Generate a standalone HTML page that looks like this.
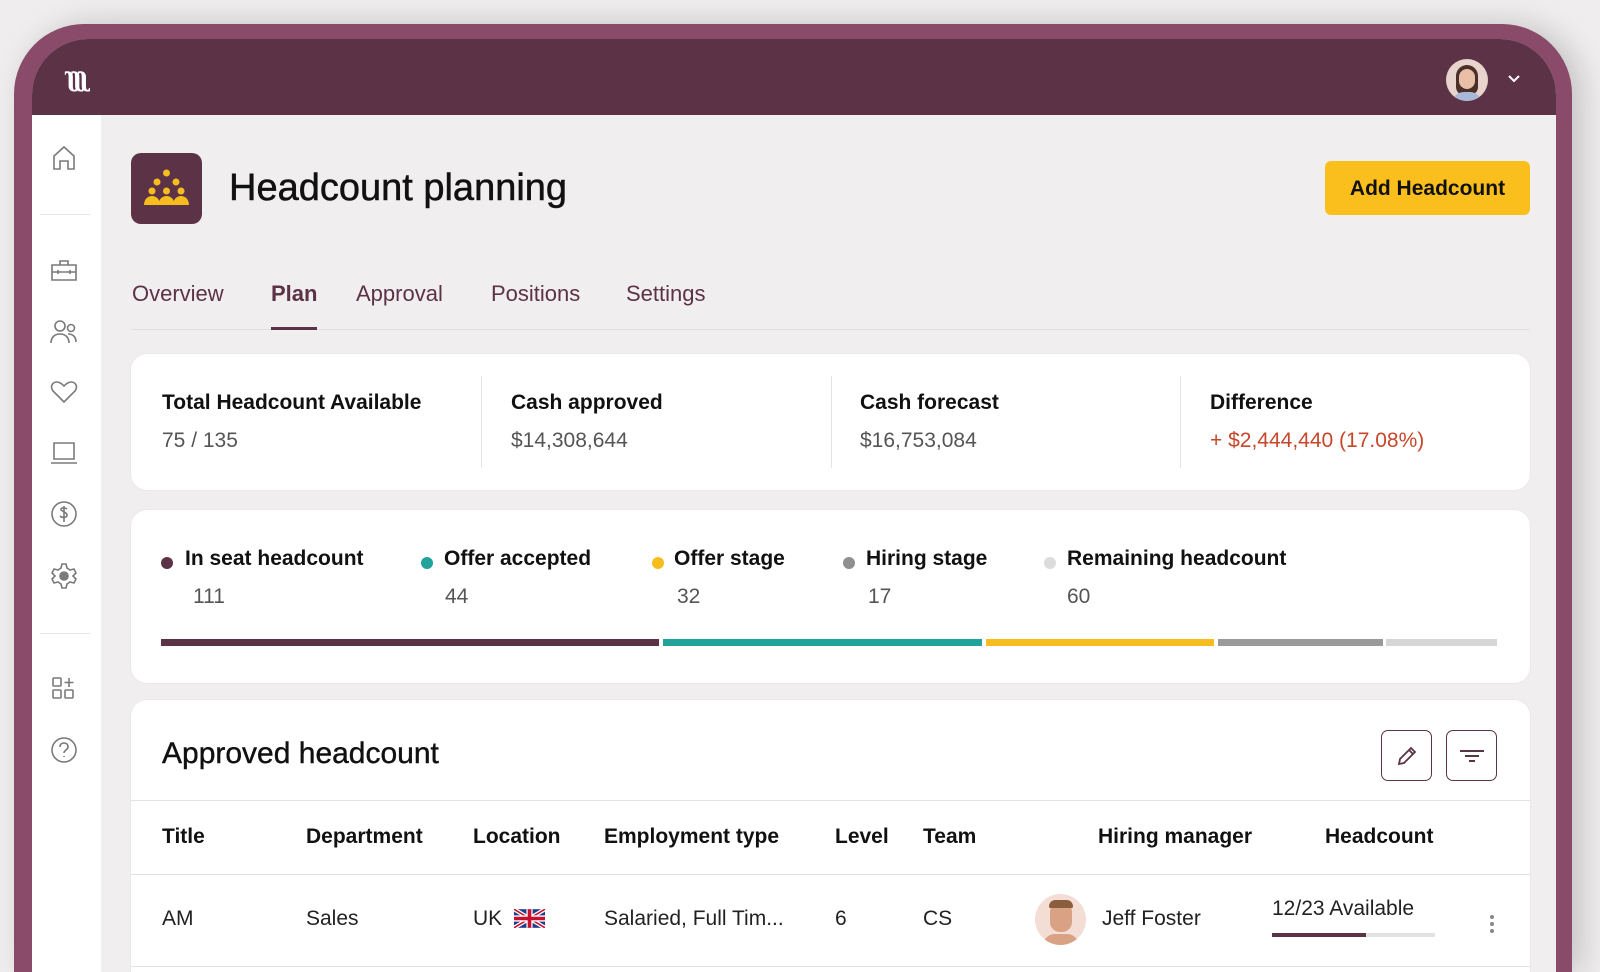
<!DOCTYPE html>
<html><head><meta charset="utf-8">
<style>
*{margin:0;padding:0;box-sizing:border-box}
html,body{width:1600px;height:972px;overflow:hidden}
body{background:#efeded;font-family:"Liberation Sans",sans-serif;position:relative;color:#111}
.abs{position:absolute}
.frame{left:14px;top:24px;width:1558px;height:948px;border-radius:70px 70px 0 0;background:#8a4a6a;box-shadow:10px 0 30px rgba(0,0,0,.18)}
.screen{left:32px;top:39px;width:1524px;height:933px;border-radius:56px 56px 0 0;background:#f0eeef;overflow:hidden}
.top{left:0;top:0;width:1524px;height:76px;background:#5c3246}
.side{left:0;top:76px;width:69px;height:857px;background:#fff}
.card{background:#fff;border-radius:16px;box-shadow:0 0 0 1px #ebe8ea}
.t{position:absolute;white-space:nowrap}
.lbl{font-size:21px;font-weight:bold;color:#111}
.val{font-size:21px;color:#555}
.dot{position:absolute;width:12px;height:12px;border-radius:50%}
.th{font-size:21px;font-weight:bold}
.td{font-size:21px;color:#222}
svg.ic{position:absolute;fill:none;stroke:#7a7a7a;stroke-width:1.6}
</style></head><body>
<div class="abs frame"></div>
<div class="abs screen">
 <div class="abs top">
  <div class="t" style="left:33px;top:20px;font-size:30px;font-weight:bold;color:#fff;letter-spacing:-4px;font-family:'Liberation Serif',serif">ʅʅʅ</div>
  <div class="abs" style="left:1414px;top:20px;width:42px;height:42px;border-radius:50%;background:#e8d4cc;overflow:hidden">
   <div class="abs" style="left:10px;top:6px;width:22px;height:30px;border-radius:11px 11px 8px 8px;background:#4a3028"></div>
   <div class="abs" style="left:13px;top:10px;width:16px;height:20px;border-radius:8px;background:#e9bfa8"></div>
   <div class="abs" style="left:6px;top:33px;width:30px;height:14px;border-radius:12px 12px 0 0;background:#a9b8d8"></div>
  </div>
  <svg class="abs" style="left:1474px;top:34px" width="16" height="12" viewBox="0 0 16 12"><path d="M3 3l5 5 5-5" stroke="#fff" stroke-width="2" fill="none"/></svg>
 </div>
 <div class="abs side">
  <svg class="ic" style="left:19px;top:30px" width="26" height="26" viewBox="0 0 26 26"><path d="M3 24V11L13 2l10 9v13h-6v-8h-8v8z"/></svg>
  <div class="abs" style="left:8px;top:99px;width:50px;height:1px;background:#e8e6e8"></div>
  <svg class="ic" style="left:18px;top:142px" width="28" height="26" viewBox="0 0 28 26"><path d="M2 8h24v15H2zM10 8V4h8v4M2 15h24M8 13v4M20 13v4"/></svg>
  <svg class="ic" style="left:18px;top:204px" width="28" height="26" viewBox="0 0 28 26"><circle cx="10" cy="7" r="5"/><circle cx="21" cy="9" r="3.5"/><path d="M1 24c0-6 4-9 9-9s9 3 9 9M18 15c5 0 8 3 8 8"/></svg>
  <svg class="ic" style="left:18px;top:264px" width="28" height="26" viewBox="0 0 28 26"><path d="M14 23L3 12C0 8 2 3 7 3c3 0 5 2 7 4 2-2 4-4 7-4 5 0 7 5 4 9z"/></svg>
  <svg class="ic" style="left:18px;top:325px" width="28" height="26" viewBox="0 0 28 26"><path d="M4 3h20v16H4zM1 23h26"/></svg>
  <svg class="ic" style="left:18px;top:385px" width="28" height="28" viewBox="0 0 28 28"><circle cx="14" cy="14" r="12"/><path d="M17 9c-1-1-5-2-6 0s6 3 6 6-5 3-7 1M14 6v16"/></svg>
  <svg class="ic" style="left:18px;top:447px" width="28" height="28" viewBox="0 0 28 28"><path d="M12 2h4l1 4 3 2 4-1 2 4-3 3 3 3-2 4-4-1-3 2-1 4h-4l-1-4-3-2-4 1-2-4 3-3-3-3 2-4 4 1 3-2z"/><circle cx="14" cy="14" r="4" fill="#7a7a7a"/></svg>
  <div class="abs" style="left:8px;top:518px;width:50px;height:1px;background:#e8e6e8"></div>
  <svg class="ic" style="left:19px;top:561px" width="26" height="26" viewBox="0 0 26 26"><rect x="2" y="2" width="8" height="8" rx="1"/><rect x="2" y="14" width="8" height="8" rx="1"/><rect x="14" y="14" width="8" height="8" rx="1"/><path d="M18 2v9M13.5 6.5h9"/></svg>
  <svg class="ic" style="left:18px;top:621px" width="28" height="28" viewBox="0 0 28 28"><circle cx="14" cy="14" r="12"/><path d="M10 11c0-3 2-4 4-4s4 1 4 4-4 3-4 6M14 20v1"/></svg>
 </div>
 <div class="abs" style="left:99px;top:114px;width:71px;height:71px;border-radius:10px;background:#5c3246"></div>
 <svg class="abs" style="left:99px;top:114px" width="71" height="71" viewBox="0 0 71 71" fill="#f7bd1e">
  <circle cx="35.5" cy="20" r="3.5"/><circle cx="26" cy="29" r="3.5"/><circle cx="45" cy="29" r="3.5"/>
  <circle cx="21" cy="38" r="3.5"/><circle cx="35.5" cy="38" r="3.5"/><circle cx="50" cy="38" r="3.5"/>
  <path d="M13 52c0-6 4-9 8-9s8 3 8 9zM27.5 52c0-6 4-9 8-9s8 3 8 9zM42 52c0-6 4-9 8-9s8 3 8 9z"/>
 </svg>
 <div class="t" style="left:197px;top:128px;font-size:38px;color:#111;-webkit-text-stroke:0.5px #111">Headcount planning</div>
 <div class="abs" style="left:1293px;top:122px;width:205px;height:54px;border-radius:6px;background:#fbbf1d"></div>
 <div class="t" style="left:1293px;top:138px;width:205px;text-align:center;font-size:21px;font-weight:bold">Add Headcount</div>
 <div class="t" style="left:100px;top:242px;font-size:22px;color:#5c3246">Overview</div>
 <div class="t" style="left:239px;top:242px;font-size:22px;font-weight:bold;color:#5c3246">Plan</div>
 <div class="t" style="left:324px;top:242px;font-size:22px;color:#5c3246">Approval</div>
 <div class="t" style="left:459px;top:242px;font-size:22px;color:#5c3246">Positions</div>
 <div class="t" style="left:594px;top:242px;font-size:22px;color:#5c3246">Settings</div>
 <div class="abs" style="left:100px;top:290px;width:1398px;height:1px;background:#e2dfe1"></div>
 <div class="abs" style="left:239px;top:288px;width:46px;height:3px;background:#5c3246"></div>
 <div class="abs card" style="left:99px;top:315px;width:1399px;height:136px">
  <div class="abs" style="left:350px;top:22px;width:1px;height:92px;background:#e6e3e5"></div>
  <div class="abs" style="left:700px;top:22px;width:1px;height:92px;background:#e6e3e5"></div>
  <div class="abs" style="left:1049px;top:22px;width:1px;height:92px;background:#e6e3e5"></div>
  <div class="t lbl" style="left:31px;top:37px">Total Headcount Available</div>
  <div class="t val" style="left:31px;top:75px">75 / 135</div>
  <div class="t lbl" style="left:380px;top:37px">Cash approved</div>
  <div class="t val" style="left:380px;top:75px">$14,308,644</div>
  <div class="t lbl" style="left:729px;top:37px">Cash forecast</div>
  <div class="t val" style="left:729px;top:75px">$16,753,084</div>
  <div class="t lbl" style="left:1079px;top:37px">Difference</div>
  <div class="t val" style="left:1079px;top:75px;color:#c6472a">+ $2,444,440 (17.08%)</div>
 </div>
 <div class="abs card" style="left:99px;top:471px;width:1399px;height:173px">
  <div class="dot" style="left:30px;top:47px;background:#5c3246"></div>
  <div class="t lbl" style="left:54px;top:37px">In seat headcount</div>
  <div class="t val" style="left:62px;top:75px">111</div>
  <div class="dot" style="left:290px;top:47px;background:#21a29a"></div>
  <div class="t lbl" style="left:313px;top:37px">Offer accepted</div>
  <div class="t val" style="left:314px;top:75px">44</div>
  <div class="dot" style="left:521px;top:47px;background:#f7bd1e"></div>
  <div class="t lbl" style="left:543px;top:37px">Offer stage</div>
  <div class="t val" style="left:546px;top:75px">32</div>
  <div class="dot" style="left:712px;top:47px;background:#8f8f8f"></div>
  <div class="t lbl" style="left:735px;top:37px">Hiring stage</div>
  <div class="t val" style="left:737px;top:75px">17</div>
  <div class="dot" style="left:913px;top:47px;background:#dcdcdc"></div>
  <div class="t lbl" style="left:936px;top:37px">Remaining headcount</div>
  <div class="t val" style="left:936px;top:75px">60</div>
  <div class="abs" style="left:30px;top:129px;width:498px;height:7px;background:#5c3246"></div>
  <div class="abs" style="left:532px;top:129px;width:319px;height:7px;background:#21a29a"></div>
  <div class="abs" style="left:855px;top:129px;width:228px;height:7px;background:#f7bd1e"></div>
  <div class="abs" style="left:1087px;top:129px;width:165px;height:7px;background:#9a9a9a"></div>
  <div class="abs" style="left:1255px;top:129px;width:111px;height:7px;background:#d6d6d6"></div>
 </div>
 <div class="abs card" style="left:99px;top:661px;width:1399px;height:400px">
  <div class="t" style="left:31px;top:37px;font-size:30px;-webkit-text-stroke:0.4px #111">Approved headcount</div>
  <div class="abs" style="left:1250px;top:30px;width:51px;height:51px;border:1.5px solid #5c3246;border-radius:7px"></div>
  <svg class="abs" style="left:1262px;top:42px" width="28" height="28" viewBox="0 0 28 28"><path d="M6 22l1-5L18 6l4 4-11 11zM16 8l4 4" stroke="#5c3246" stroke-width="1.8" fill="none"/></svg>
  <div class="abs" style="left:1315px;top:30px;width:51px;height:51px;border:1.5px solid #5c3246;border-radius:7px"></div>
  <svg class="abs" style="left:1327px;top:42px" width="28" height="28" viewBox="0 0 28 28"><path d="M2 9h24M7 14h14M11 19h6" stroke="#5c3246" stroke-width="2" fill="none"/></svg>
  <div class="abs" style="left:0;top:100px;width:1399px;height:1px;background:#e4e1e3"></div>
  <div class="t th" style="left:31px;top:125px">Title</div>
  <div class="t th" style="left:175px;top:125px">Department</div>
  <div class="t th" style="left:342px;top:125px">Location</div>
  <div class="t th" style="left:473px;top:125px">Employment type</div>
  <div class="t th" style="left:704px;top:125px">Level</div>
  <div class="t th" style="left:792px;top:125px">Team</div>
  <div class="t th" style="left:967px;top:125px">Hiring manager</div>
  <div class="t th" style="left:1194px;top:125px">Headcount</div>
  <div class="abs" style="left:0;top:174px;width:1399px;height:1px;background:#e4e1e3"></div>
  <div class="t td" style="left:31px;top:207px">AM</div>
  <div class="t td" style="left:175px;top:207px">Sales</div>
  <div class="t td" style="left:342px;top:207px">UK</div>
  <svg class="abs" style="left:383px;top:209px" width="31" height="19" viewBox="0 0 60 36"><rect width="60" height="36" fill="#1f3b8c"/><path d="M0 0L60 36M60 0L0 36" stroke="#fff" stroke-width="8"/><path d="M0 0L60 36M60 0L0 36" stroke="#c8102e" stroke-width="3"/><path d="M30 0v36M0 18h60" stroke="#fff" stroke-width="12"/><path d="M30 0v36M0 18h60" stroke="#c8102e" stroke-width="7"/></svg>
  <div class="t td" style="left:473px;top:207px">Salaried, Full Tim...</div>
  <div class="t td" style="left:704px;top:207px">6</div>
  <div class="t td" style="left:792px;top:207px">CS</div>
  <div class="abs" style="left:904px;top:194px;width:51px;height:51px;border-radius:50%;background:#f3ddd4;overflow:hidden">
   <div class="abs" style="left:15px;top:8px;width:22px;height:30px;border-radius:10px;background:#d9a284"></div>
   <div class="abs" style="left:14px;top:6px;width:24px;height:8px;border-radius:8px 8px 2px 2px;background:#8a5d3e"></div>
   <div class="abs" style="left:8px;top:40px;width:36px;height:14px;border-radius:12px 12px 0 0;background:#d9a284"></div>
  </div>
  <div class="t td" style="left:971px;top:207px">Jeff Foster</div>
  <div class="t td" style="left:1141px;top:197px">12/23 Available</div>
  <div class="abs" style="left:1141px;top:233px;width:163px;height:4px;background:#e3e3e3"></div>
  <div class="abs" style="left:1141px;top:233px;width:94px;height:4px;background:#5c3246"></div>
  <div class="abs" style="left:1359px;top:215px;width:4px;height:4px;border-radius:50%;background:#888;box-shadow:0 7px 0 #888,0 14px 0 #888"></div>
  <div class="abs" style="left:0;top:266px;width:1399px;height:1px;background:#e4e1e3"></div>
 </div>
</div>
</body></html>
